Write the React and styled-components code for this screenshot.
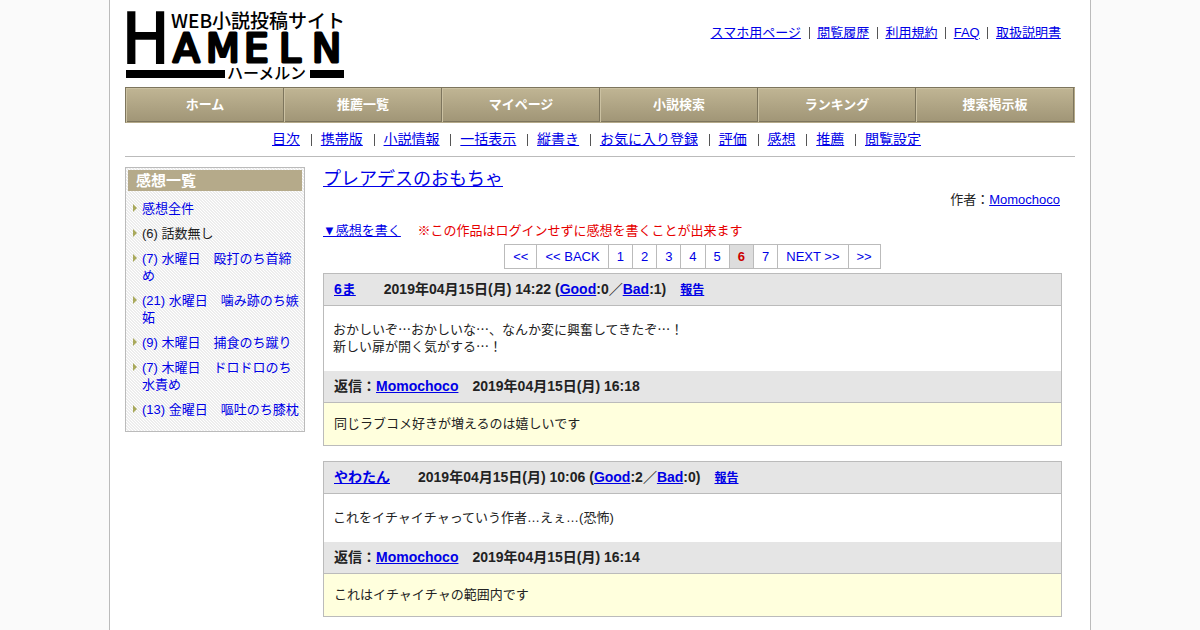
import React from 'react';
import styled, { createGlobalStyle } from 'styled-components';

const GlobalStyle = createGlobalStyle`
  * {
    box-sizing: border-box;
  }

  body {
    margin: 0;
    background: #fafafa;
    color: #222;
    font-family: 'Liberation Sans', 'Noto Sans CJK JP', sans-serif;
    font-size: 13px;
    line-height: 17px;
  }

  a {
    color: #0000e6;
  }
`;

const Page = styled.div`
  max-width: 982px;
  min-height: 100vh;
  margin: 0 auto;
  padding: 0 15px 15px;
  background: #fff;
  border: solid #bbb;
  border-width: 0 1px;
`;

const Header = styled.header`
  display: flex;
  justify-content: space-between;
  height: 87px;
`;

const LogoLink = styled.a`
  display: block;
`;

const LogoImage = styled.svg`
  display: block;
  overflow: visible;
`;

const TopLinks = styled.nav`
  padding: 24px 14px 0 0;
`;

const Bar = styled.span`
  display: inline-block;
  width: 1px;
  height: 12px;
  margin: ${(props) => (props.$wide ? '0 5px 0 7px' : '0 4px 0 4px')};
  background: #555;
  vertical-align: -2px;
`;

const GlobalMenu = styled.nav`
  display: grid;
  grid-template-columns: repeat(6, 1fr);
  height: 36px;
  background: linear-gradient(#c0b594, #a09576);
  border: 1px solid #7d755d;
  border-right-color: #b5aa8a;
  border-bottom-color: #b5aa8a;
  box-shadow: inset 0 -1px 0 #7d755d, inset 0 1px 0 #cbc1a2;
`;

const MenuLink = styled.a`
  display: flex;
  align-items: center;
  justify-content: center;
  padding-bottom: 1px;
  border-left: 1px solid #cbc1a2;
  border-right: 1px solid #7d755d;
  color: #fff;
  font-weight: bold;
  text-decoration: none;

  &:hover {
    background: #a09576;
  }
`;

const SubMenu = styled.nav`
  padding: 8px 7px 8px 0;
  border-bottom: 1px solid #bbb;
  font-size: 14px;
  text-align: center;
`;

const Columns = styled.div`
  display: flex;
  align-items: flex-start;
  gap: 18px;
  padding-top: 10px;
`;

const Sidebar = styled.aside`
  flex: 0 0 180px;
  padding: 2px;
  border: 1px solid #bbb;
  background: linear-gradient(45deg, #ededed 25%, #fff 25% 50%, #ededed 50% 75%, #fff 75%);
  background-size: 3px 3px;
`;

const SidebarTitle = styled.h2`
  margin: 0;
  padding: 2px 8px;
  background: #b5aa8a;
  color: #fff;
  font-size: 15px;
  line-height: 17px;
`;

const EpisodeList = styled.ul`
  display: flex;
  flex-direction: column;
  gap: 8px;
  margin: 0;
  padding: 9px 0 11px 5px;
  list-style: none;
`;

const Episode = styled.li`
  display: flex;

  &::before {
    content: '';
    flex: none;
    align-self: flex-start;
    margin: 4px 5px 0 0;
    border: solid transparent;
    border-width: 4px 0 4px 4px;
    border-left-color: #a9a95c;
  }

  a {
    text-decoration: none;
  }
`;

const Main = styled.main`
  flex: 1;
  min-width: 0;
  padding-right: 13px;
`;

const Title = styled.h1`
  margin: 0;
  font-size: 18px;
  font-weight: normal;
  line-height: 24px;
`;

const Author = styled.p`
  margin: 0 2px 14px 0;
  text-align: right;
`;

const WriteLine = styled.p`
  margin: 0 0 5px;
`;

const Notice = styled.span`
  color: #e60000;
`;

const Pager = styled.nav`
  display: flex;
  justify-content: center;
  margin-bottom: 4px;
`;

const PagerItem = styled.a`
  padding: 3px 8px;
  border: solid #bbb;
  border-width: 1px 1px 1px 0;
  text-decoration: none;

  &:first-child {
    border-left-width: 1px;
  }

  &[aria-current] {
    background: #ddd;
    color: #c00;
    font-weight: bold;
  }
`;

const Post = styled.article`
  margin-bottom: 15px;
  border: 1px solid #bbb;
`;

const PostHead = styled.h3`
  margin: 0;
  padding: 7px 10px;
  background: #e5e5e5;
  border-bottom: 1px solid #bbb;
  font-size: 14px;
  white-space: pre-wrap;
`;

const Report = styled.a`
  font-size: 12px;
  line-height: 12px;
`;

const PostBody = styled.div`
  padding: 15px 9px 16px;
  white-space: pre-line;
`;

const Reply = styled.div`
  padding: 12px 10px 13px;
  background: #ffffdd;
`;

const topLinks = ['スマホ用ページ', '閲覧履歴', '利用規約', 'FAQ', '取扱説明書'];
const menu = ['ホーム', '推薦一覧', 'マイページ', '小説検索', 'ランキング', '捜索掲示板'];
const subMenu = [
  '目次', '携帯版', '小説情報', '一括表示', '縦書き',
  'お気に入り登録', '評価', '感想', '推薦', '閲覧設定',
];
const episodes = [
  { text: '感想全件', link: true },
  { text: '(6) 話数無し', link: false },
  { text: '(7) 水曜日　殴打のち首締め', link: true },
  { text: '(21) 水曜日　噛み跡のち嫉妬', link: true },
  { text: '(9) 木曜日　捕食のち蹴り', link: true },
  { text: '(7) 木曜日　ドロドロのち水責め', link: true },
  { text: '(13) 金曜日　嘔吐のち膝枕', link: true },
];
const pages = ['<<', '<< BACK', '1', '2', '3', '4', '5', '6', '7', 'NEXT >>', '>>'];
const currentPage = '6';

const posts = [
  {
    name: '6ま',
    date: '2019年04月15日(月) 14:22',
    good: 0,
    bad: 1,
    body: 'おかしいぞ⋯おかしいな⋯、なんか変に興奮してきたぞ⋯！\n新しい扉が開く気がする⋯！',
    replyDate: '2019年04月15日(月) 16:18',
    reply: '同じラブコメ好きが増えるのは嬉しいです',
  },
  {
    name: 'やわたん',
    date: '2019年04月15日(月) 10:06',
    good: 2,
    bad: 0,
    body: 'これをイチャイチャっていう作者…えぇ…(恐怖)',
    replyDate: '2019年04月15日(月) 16:14',
    reply: 'これはイチャイチャの範囲内です',
  },
];

function Logo() {
  return (
    <LogoImage width="220" height="87" viewBox="0 0 220 87" role="img" aria-label="ハーメルン">
      <g fill="#000" strokeLinejoin="round">
        <text
          x="-3"
          y="63"
          fontFamily="'DejaVu Sans Condensed', 'DejaVu Sans', sans-serif"
          fontSize="70"
          stroke="#000"
          strokeWidth="2"
          strokeLinejoin="miter"
        >
          H
        </text>
        <text
          x="48 81 119 154 187"
          y="62"
          fontFamily="'DejaVu Sans', sans-serif"
          fontSize="39"
          stroke="#000"
          strokeWidth="3"
        >
          AMELN
        </text>
        <text x="46" y="28" fontFamily="'Noto Sans CJK JP', sans-serif" fontSize="19" fontWeight="500">
          WEB小説投稿サイト
        </text>
        <text x="102" y="79" fontFamily="'Noto Sans CJK JP', sans-serif" fontSize="16" fontWeight="500">
          ハーメルン
        </text>
        <rect x="1" y="70" width="99" height="8" />
        <rect x="185" y="70" width="34" height="8" />
      </g>
    </LogoImage>
  );
}

function LinkRow({ items, wide }) {
  return items.map((item, index) => (
    <React.Fragment key={item}>
      {index > 0 && <> <Bar $wide={wide} /> </>}
      <a href="#">{item}</a>
    </React.Fragment>
  ));
}

function Comment({ post }) {
  return (
    <Post>
      <PostHead>
        <a href="#">{post.name}</a>{'　　'}{post.date} (<a href="#">Good</a>:{post.good}／
        <a href="#">Bad</a>:{post.bad}){'　'}<Report href="#">報告</Report>
      </PostHead>
      <PostBody>{post.body}</PostBody>
      <PostHead>
        返信：<a href="#">Momochoco</a>{'　'}{post.replyDate}
      </PostHead>
      <Reply>{post.reply}</Reply>
    </Post>
  );
}

function App() {
  return (
    <Page>
      <GlobalStyle />
      <Header>
        <LogoLink href="#">
          <Logo />
        </LogoLink>
        <TopLinks>
          <LinkRow items={topLinks} />
        </TopLinks>
      </Header>

      <GlobalMenu>
        {menu.map((item) => (
          <MenuLink key={item} href="#">{item}</MenuLink>
        ))}
      </GlobalMenu>
      <SubMenu>
        <LinkRow items={subMenu} wide />
      </SubMenu>

      <Columns>
        <Sidebar>
          <SidebarTitle>感想一覧</SidebarTitle>
          <EpisodeList>
            {episodes.map(({ text, link }) => (
              <Episode key={text}>
                {link ? <a href="#">{text}</a> : <span>{text}</span>}
              </Episode>
            ))}
          </EpisodeList>
        </Sidebar>

        <Main>
          <Title><a href="#">プレアデスのおもちゃ</a></Title>
          <Author>作者：<a href="#">Momochoco</a></Author>
          <WriteLine>
            <a href="#">▼感想を書く</a>{'　 '}
            <Notice>※この作品はログインせずに感想を書くことが出来ます</Notice>
          </WriteLine>
          <Pager>
            {pages.map((page) => (
              <PagerItem
                key={page}
                href="#"
                aria-current={page === currentPage ? 'page' : undefined}
              >
                {page}
              </PagerItem>
            ))}
          </Pager>
          {posts.map((post) => (
            <Comment key={post.name} post={post} />
          ))}
        </Main>
      </Columns>
    </Page>
  );
}

export default App;
